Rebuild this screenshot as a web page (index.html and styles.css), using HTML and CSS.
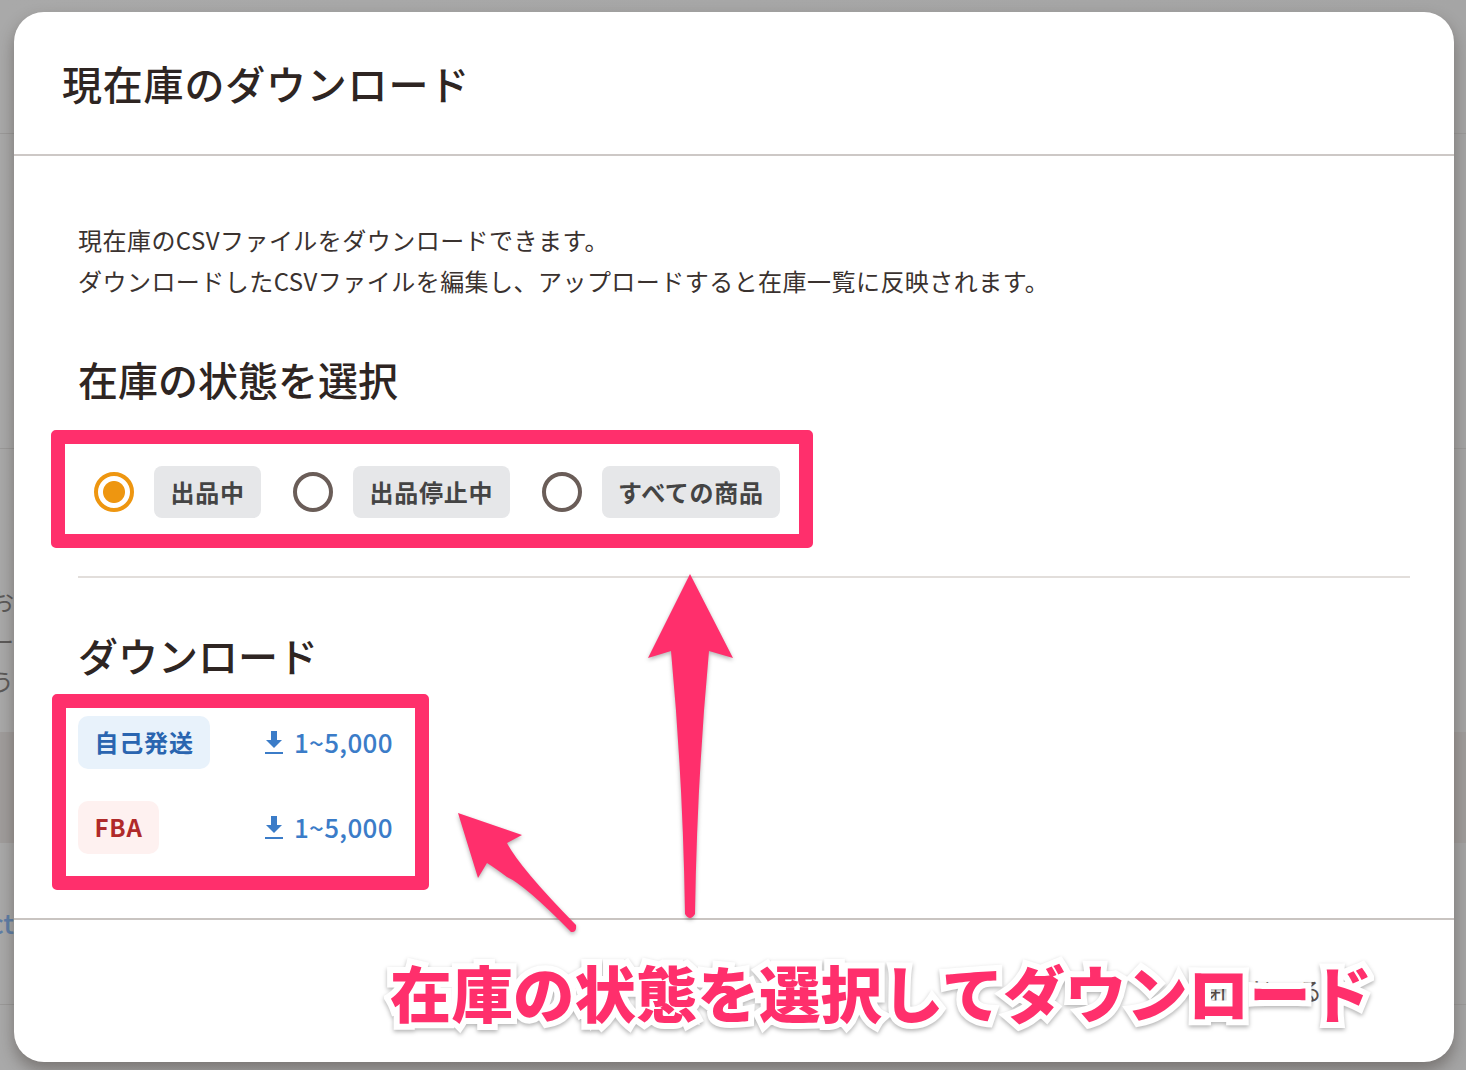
FILE: index.html
```html
<!DOCTYPE html>
<html lang="ja">
<head>
<meta charset="utf-8">
<title>現在庫のダウンロード</title>
<link rel="stylesheet" href="styles.css">
</head>
<body>
<div class="backdrop">
  <div class="bg-row bg-a"></div>
  <div class="bg-row bg-b"></div>
  <div class="bg-row bg-c">
    <div class="snip snip-dark"><span>もとお</span><span>らー</span><span>のう</span></div>
  </div>
  <div class="bg-row bg-d"></div>
  <div class="bg-row bg-e"><div class="snip snip-blue"><span>Product</span></div></div>
  <div class="bg-row bg-f"></div>
</div>

<div class="modal">
  <header class="modal-head"><h1 class="modal-title">現在庫のダウンロード</h1></header>
  <main class="modal-body">
    <p class="lead">現在庫のCSVファイルをダウンロードできます。<br>ダウンロードしたCSVファイルを編集し、アップロードすると在庫一覧に反映されます。</p>
    <h2 class="section-title section-state">在庫の状態を選択</h2>
    <div class="radios">
      <div class="radio-item"><span class="radio radio-on"></span><span class="pill">出品中</span></div>
      <div class="radio-item"><span class="radio"></span><span class="pill">出品停止中</span></div>
      <div class="radio-item"><span class="radio"></span><span class="pill">すべての商品</span></div>
    </div>
    <hr class="divider">
    <h2 class="section-title section-dl">ダウンロード</h2>
    <div class="dl-grid">
      <div class="tag-cell"><span class="tag tag-self">自己発送</span></div>
      <a class="dl-link">
        <svg class="dl-icon" viewBox="0 0 20 24" aria-hidden="true"><path d="M7 0h6v9h5l-8 8-8-8h5z"/><rect x="1" y="21" width="18" height="2"/></svg>
        <span>1~5,000</span>
      </a>
      <div class="tag-cell"><span class="tag tag-fba">FBA</span></div>
      <a class="dl-link">
        <svg class="dl-icon" viewBox="0 0 20 24" aria-hidden="true"><path d="M7 0h6v9h5l-8 8-8-8h5z"/><rect x="1" y="21" width="18" height="2"/></svg>
        <span>1~5,000</span>
      </a>
    </div>
  </main>
  <footer class="modal-foot"><span class="foot-btn">閉じる</span></footer>
</div>

<div class="callout callout-state"></div>
<div class="callout callout-dl"></div>
<svg class="arrows" viewBox="0 0 1466 1070" aria-hidden="true">
  <path d="M690 574L733 658 709 651Q697 780 695 914Q690 922 685 914Q683 780 671 651L648 658Z"/>
  <path d="M458 813L522 835 507 843Q520 868 576 925Q577 933 571 932Q525 885 507 877Q495 868 487 863L478 878Z"/>
</svg>
<div class="shout">在庫の状態を選択してダウンロード</div>
</body>
</html>
```

FILE: styles.css
```css
* { box-sizing: border-box; }
html, body { margin: 0; padding: 0; }
body {
  width: 1466px;
  height: 1070px;
  overflow: hidden;
  position: relative;
  background: #a9a9a9;
  color: #2e2522;
  font-family: "Noto Sans CJK JP", "Noto Sans", sans-serif;
}

/* dimmed page behind the dialog */
.backdrop {
  position: absolute;
  inset: 0;
  display: flex;
  flex-direction: column;
  background: linear-gradient(90deg, #a9a9a9 0, #a5a5a5 100%);
}
.bg-row { border-bottom: 1px solid #9b9a99; overflow: hidden; flex: none; }
.bg-a { height: 134px; }
.bg-b { height: 315px; }
.bg-c { height: 283px; border-bottom: 0; padding-top: 132px; }
.bg-d { height: 111px; background: #a09d9c; border-bottom: 0; }
.bg-e { height: 162px; padding-top: 64px; }
.bg-f { height: 65px; border-bottom: 0; }
.snip {
  width: 14px;
  display: flex;
  flex-direction: column;
  align-items: flex-end;
  white-space: nowrap;
  font-size: 24px;
}
.snip-dark { color: #5c5a59; line-height: 40px; }
.snip-blue { color: #5f7fa8; font-size: 27px; font-weight: 500; line-height: 32px; }

/* dialog */
.modal {
  position: absolute;
  left: 14px;
  top: 12px;
  width: 1440px;
  height: 1050px;
  display: flex;
  flex-direction: column;
  background: #fff;
  border-radius: 30px;
  box-shadow: 0 8px 16px rgba(50, 40, 35, .4);
}
.modal-head {
  height: 144px;
  flex: none;
  display: flex;
  align-items: flex-start;
  padding: 41px 48px 0;
  border-bottom: 2px solid #cdc8c6;
}
.modal-title {
  margin: 0;
  font-size: 40px;
  line-height: 60px;
  font-weight: 500;
  letter-spacing: .8px;
}
.modal-body {
  flex: 1;
  padding: 63px 44px 0 64px;
}
.lead {
  margin: 0;
  font-size: 24px;
  line-height: 41px;
  letter-spacing: .46px;
  color: #3a322f;
}
.section-title {
  margin: 0;
  font-size: 40px;
  line-height: 60px;
  font-weight: 500;
}
.section-state { margin-top: 48px; }
.section-dl { margin-top: 47px; }

.radios {
  display: flex;
  gap: 32px;
  margin: 57px 0 0 16px;
}
.radio-item { display: flex; align-items: center; gap: 20px; }
.radio {
  width: 40px;
  height: 40px;
  flex: none;
  border: 4px solid #6a5d58;
  border-radius: 50%;
  background: #fff;
}
.radio-on {
  border-color: #ee9610;
  background: radial-gradient(circle at center, #ee9610 0 10.5px, #fff 11.5px);
}
.pill {
  height: 52px;
  padding: 0 16.5px 2px;
  display: flex;
  align-items: center;
  border-radius: 8px;
  background: #e6e7e9;
  color: #444;
  font-size: 24px;
  font-weight: 700;
  letter-spacing: .7px;
}
.divider {
  margin: 58px 0 0;
  border: 0;
  border-top: 2px solid #e2dedb;
}

.dl-grid {
  display: grid;
  grid-template-columns: 186px auto;
  justify-content: start;
  row-gap: 32px;
  margin-top: 31px;
}
.tag-cell { display: flex; }
.tag {
  height: 53px;
  padding: 0 16.5px 2px;
  display: flex;
  align-items: center;
  border-radius: 10px;
  font-size: 24px;
  font-weight: 700;
  letter-spacing: .8px;
}
.tag-self { background: #e8f2fb; color: #2a65b0; }
.tag-fba { background: #fef1f0; color: #b02a2a; }
.dl-link {
  display: flex;
  align-items: center;
  gap: 10px;
  color: #3b7cc8;
  font-size: 26px;
  font-weight: 500;
  letter-spacing: .3px;
}
.dl-link span { position: relative; top: -1px; }
.dl-icon { width: 20px; height: 24px; fill: #3b7cc8; flex: none; }

.modal-foot {
  height: 144px;
  flex: none;
  display: flex;
  justify-content: flex-end;
  align-items: flex-start;
  padding: 52px 108px 0 0;
  border-top: 2px solid #c9c4c1;
}
.foot-btn {
  font-size: 24px;
  line-height: 36px;
  letter-spacing: 24px;
  color: #5c514c;
}

/* annotation layer */
.callout {
  position: absolute;
  border: 14px solid #ff2f6c;
  border-radius: 5px;
}
.callout-state { left: 51px; top: 430px; width: 762px; height: 118px; }
.callout-dl { left: 52px; top: 694px; width: 377px; height: 196px; }
.arrows {
  position: absolute;
  inset: 0;
  width: 1466px;
  height: 1070px;
  fill: #ff2f6c;
  filter: drop-shadow(0 2px 2px rgba(0, 0, 0, .3));
}
.shout {
  position: absolute;
  left: 390px;
  top: 947px;
  white-space: nowrap;
  font-size: 61.5px;
  line-height: 90px;
  font-weight: 900;
  color: #ff2f6c;
  -webkit-text-stroke: 12px #fff;
  paint-order: stroke fill;
  filter: drop-shadow(0 2px 2px rgba(0, 0, 0, .3));
}
```
